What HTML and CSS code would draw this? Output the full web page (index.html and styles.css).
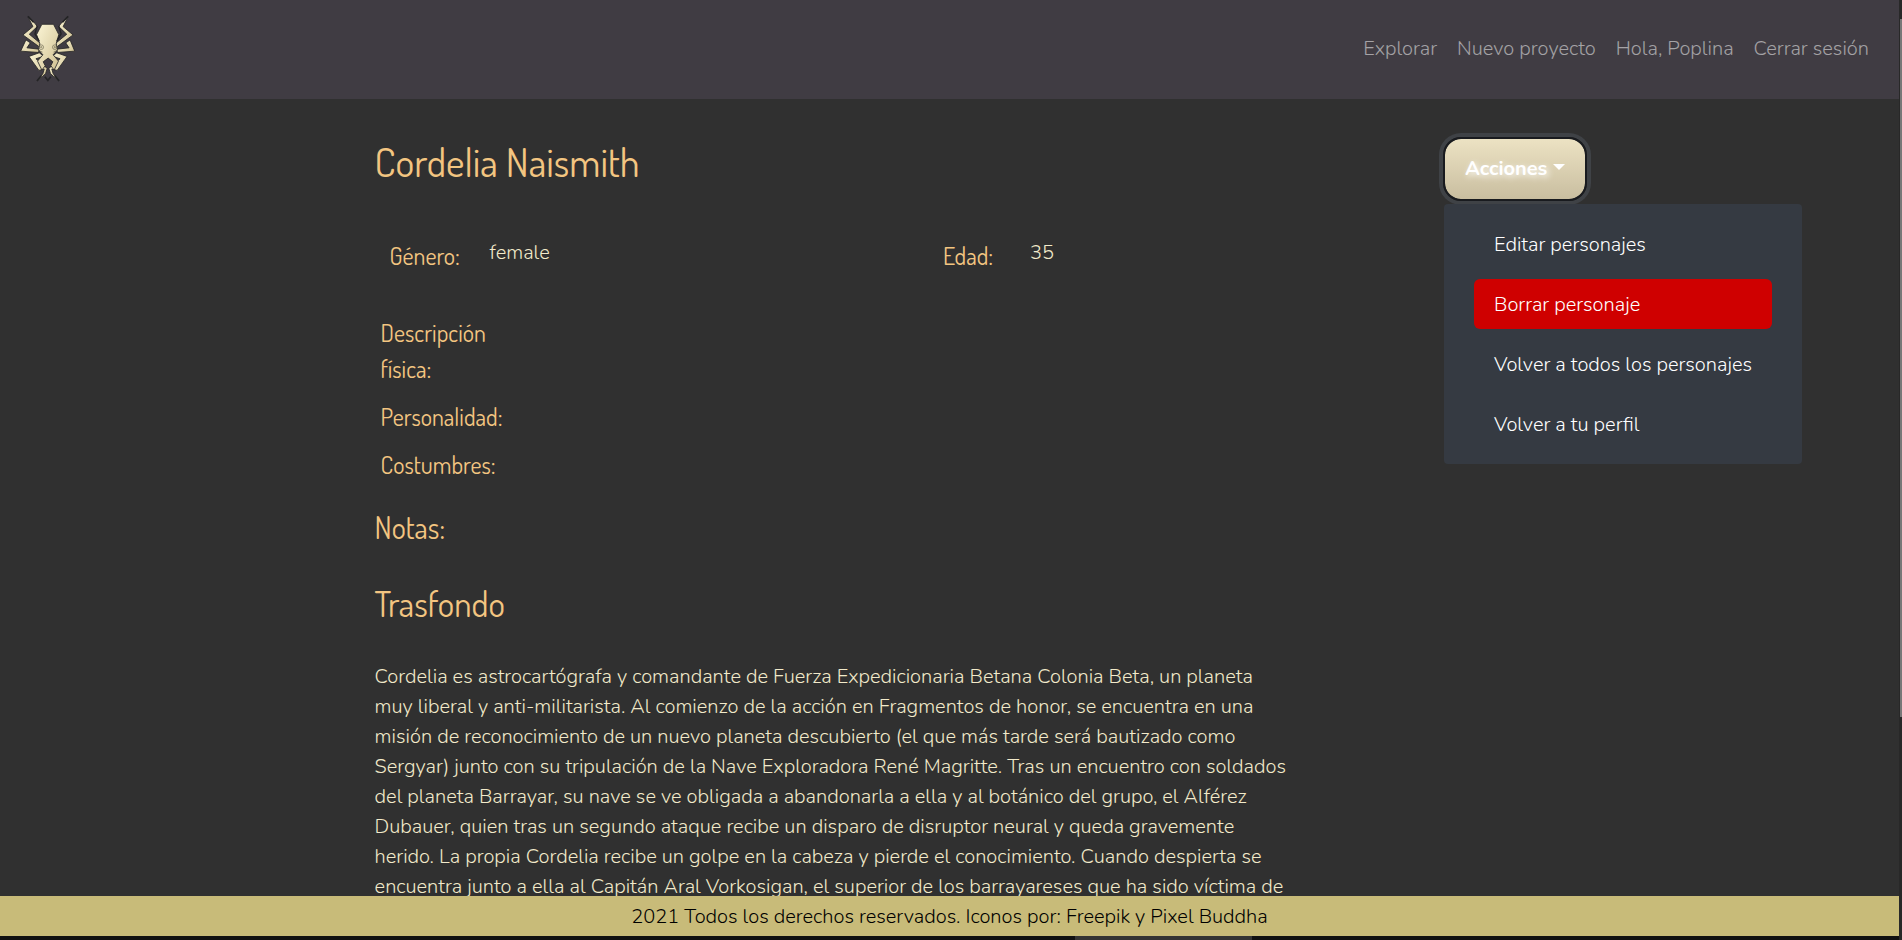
FILE: index.html
```
<!DOCTYPE html>
<html lang="es">
<head>
<meta charset="utf-8">
<title>Cordelia Naismith</title>
<link rel="stylesheet" href="styles.css">
</head>
<body>
<div class="page">
  <nav class="navbar">
    <a class="brand" href="#" aria-label="Inicio">
      <svg class="logo" viewBox="60 36 190 220">
        <defs>
          <linearGradient id="skin" x1="0" y1="0" x2="1" y2="1">
            <stop offset="0" stop-color="#fbf5d6"/>
            <stop offset="1" stop-color="#d0c192"/>
          </linearGradient>
        </defs>
        <g stroke="#242426" stroke-width="2.5" stroke-linejoin="round" fill="url(#skin)">
          <path d="M84 50L106 71L112 80L88 103L121 130L118 141L69 105L99 80Z"/>
          <path d="M205 50L183 71L177 80L201 103L168 130L171 141L220 105L190 80Z"/>
          <path d="M78 120L62 154L116 158L118 148L81 144L91 129Z"/>
          <path d="M211 120L225 154L173 158L171 148L208 144L198 129Z"/>
          <path d="M118 159L87 170L117 212L133 208L129 222L113 243L137 222L142 206L108 177L132 169Z"/>
          <path d="M171 159L202 170L172 212L156 208L160 222L176 243L152 222L147 206L181 177L157 169Z"/>
          <path d="M126 73H161L177 104L169 132L173 150L160 165L176 184L163 211L153 198L159 186L145 175L130 186L136 198L126 211L113 184L129 165L116 150L120 132L110 104Z"/>
          <path d="M112 78L105 102L118 124M177 78L184 102L171 124" fill="none" stroke-width="4"/>
        </g>
        <g fill="none" stroke="#6b654f" stroke-width="2">
          <circle cx="124" cy="142" r="7"/><circle cx="165" cy="142" r="7"/>
          <circle cx="124" cy="142" r="2"/><circle cx="165" cy="142" r="2"/>
          <path d="M117 152L128 157M172 152L161 157"/>
        </g>
        <path d="M84 49L101 67M205 49L188 67M124 228L111 244M165 228L178 244M135 231L144 242L153 231" stroke="#242426" stroke-width="5" fill="none"/>
      </svg>
    </a>
    <div class="links">
      <a href="#">Explorar</a>
      <a href="#">Nuevo proyecto</a>
      <a href="#">Hola, Poplina</a>
      <a href="#">Cerrar sesión</a>
    </div>
  </nav>
  <main class="main">
    <article class="sheet">
      <h1>Cordelia Naismith</h1>
      <div class="facts">
        <div class="fact"><span class="label">Género:</span><span>female</span></div>
        <div class="fact"><span class="label">Edad:</span><span>35</span></div>
      </div>
      <div class="traits">
        <div class="label">Descripción<br>física:</div>
        <div class="label">Personalidad:</div>
        <div class="label">Costumbres:</div>
      </div>
      <h3>Notas:</h3>
      <h2>Trasfondo</h2>
      <p>Cordelia es astrocartógrafa y comandante de Fuerza Expedicionaria Betana Colonia Beta, un planeta muy liberal y anti-militarista. Al comienzo de la acción en Fragmentos de honor, se encuentra en una misión de reconocimiento de un nuevo planeta descubierto (el que más tarde será bautizado como Sergyar) junto con su tripulación de la Nave Exploradora René Magritte. Tras un encuentro con soldados del planeta Barrayar, su nave se ve obligada a abandonarla a ella y al botánico del grupo, el Alférez Dubauer, quien tras un segundo ataque recibe un disparo de disruptor neural y queda gravemente herido. La propia Cordelia recibe un golpe en la cabeza y pierde el conocimiento. Cuando despierta se encuentra junto a ella al Capitán Aral Vorkosigan, el superior de los barrayareses que ha sido víctima de</p>
    </article>
    <aside class="actions">
      <button class="toggle" type="button">Acciones<span class="caret"></span></button>
      <div class="menu">
        <a href="#">Editar personajes</a>
        <a href="#" class="danger">Borrar personaje</a>
        <a href="#">Volver a todos los personajes</a>
        <a href="#">Volver a tu perfil</a>
      </div>
    </aside>
  </main>
  <footer class="footer">2021 Todos los derechos reservados. Iconos por: Freepik y Pixel Buddha</footer>
  <div class="hbar"><div class="hthumb"></div></div>
</div>
<div class="vbar"><div class="vthumb"></div></div>
</body>
</html>
```
FILE: styles.css
```
* { box-sizing: border-box; }
body {
  margin: 0;
  height: 940px;
  overflow: hidden;
  display: flex;
  background: #303030;
  color: #f2eaca;
  font: 300 20px/30px Nunito, "Open Sans", sans-serif;
}
a { color: inherit; text-decoration: none; }
.page { width: 1899px; height: 940px; display: flex; flex-direction: column; }
.navbar {
  flex: none;
  height: 99px;
  padding: 0 30px 2px 20px;
  display: flex;
  align-items: center;
  justify-content: space-between;
  background: #403c43;
}
.logo { display: block; width: 63px; height: 73px; }
.links { display: flex; gap: 20px; color: rgba(255, 255, 255, .53); }
.main {
  flex: 1;
  min-height: 0;
  overflow: hidden;
  padding: 38px 0 0 374.6px;
  display: flex;
}
.sheet { width: 920px; margin-right: 148.4px; }
h1, h2, h3, .label { font-family: Dosis, "Open Sans", sans-serif; font-weight: 400; color: #f3c581; margin: 0; }
h1 { font-size: 40px; line-height: 48px; }
h2 { font-size: 35px; line-height: 42px; }
h3 { font-size: 30px; line-height: 36px; margin: 26px 0 37px; }
.label { font-size: 24px; line-height: 36px; }
.facts { margin-top: 53px; height: 77px; padding-left: 15px; display: grid; grid-template-columns: 553.4px 1fr; }
.fact { display: grid; grid-template-columns: 100px 1fr; align-items: start; }
.fact + .fact { grid-template-columns: 87px 1fr; }
.traits { padding-left: 6px; display: grid; gap: 12px; }
p { margin: 38px 0 0; }
.actions { width: 358px; }
.toggle {
  display: flex;
  align-items: center;
  height: 64px;
  padding: 0 20px;
  border: 2px solid #191b1f;
  border-radius: 18px;
  background: linear-gradient(#ece2c3, #c9bea0) padding-box;
  box-shadow: 0 0 0 4px #3f4246;
  color: #fff;
  font: 700 20px/30px Nunito, "Open Sans", sans-serif;
  text-shadow: 2px 2px 6px #fff;
}
.caret { margin: -4px 0 0 6px; border: 6px solid transparent; border-top-color: #fff; border-bottom: 0; }
.menu {
  position: relative;
  margin: 3px 0 0 1px;
  width: 358px;
  padding: 15px 30px;
  display: grid;
  gap: 10px;
  border-radius: 4px;
  background: #353a42;
  color: #fff;
}
.menu a { padding: 11px 20px 9px; border-radius: 6px; white-space: nowrap; }
.menu .danger { background: #cf0000; }
.footer { flex: none; height: 40px; padding-top: 6px; text-align: center; background: #c8bb79; color: #000; }
.hbar { flex: none; height: 4px; background: #111; padding-left: 1075px; }
.hthumb { width: 177px; height: 4px; background: #343434; }
.vbar { width: 3px; height: 940px; padding: 19px 0 0 1px; background: #282828; }
.vthumb { width: 2px; height: 698px; background: #777; }
```
